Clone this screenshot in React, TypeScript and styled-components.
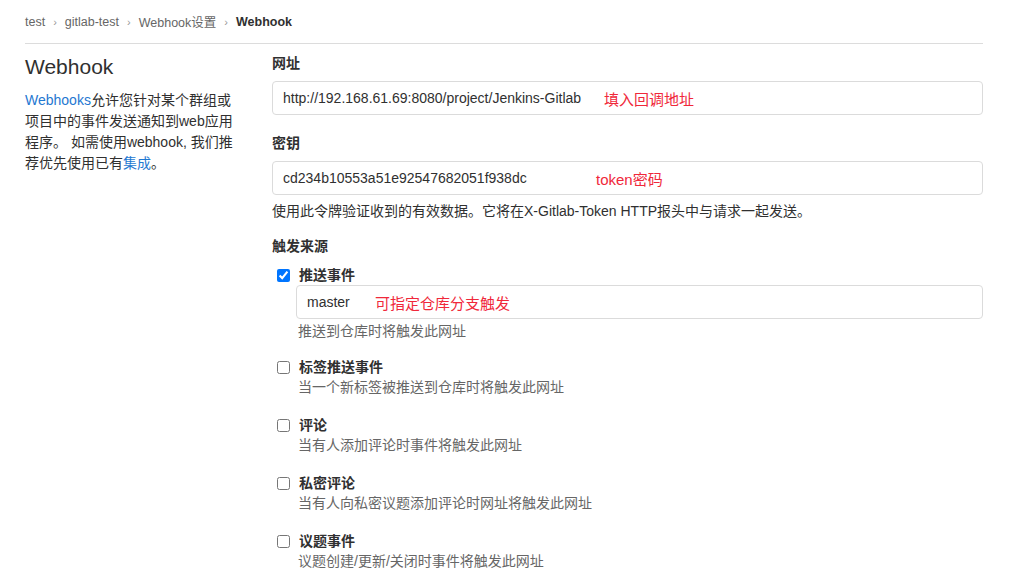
import React from 'react';
import styled, { createGlobalStyle } from 'styled-components';

const GlobalStyle = createGlobalStyle`
  body {
    margin: 0;
    background: #fff;
    font-family: "Liberation Sans", "Noto Sans CJK SC", sans-serif;
    color: #303030;
    font-size: 14px;
  }
`;

const Page = styled.div`
  width: 958px;
  padding-left: 25px;
`;

const Breadcrumbs = styled.nav`
  display: flex;
  align-items: center;
  height: 43px;
  border-bottom: 1px solid #dcdcdc;
  font-size: 12.5px;
  color: #666;
`;

const Crumb = styled.span<{ $current?: boolean }>`
  color: ${(p) => (p.$current ? '#303030' : '#666')};
  font-weight: ${(p) => (p.$current ? 700 : 400)};
`;

const Sep = styled.span`
  margin: 0 8px;
  color: #999;
  font-size: 11px;
`;

const Layout = styled.div`
  display: grid;
  grid-template-columns: 215px 1fr;
  column-gap: 32px;
`;

const Side = styled.div`
  padding-top: 9px;
`;

const Title = styled.h4`
  margin: 0 0 9px;
  font-size: 21px;
  font-weight: 500;
  line-height: 28px;
  color: #303030;
`;

const Desc = styled.p`
  margin: 0;
  line-height: 21px;
  color: #303030;
`;

const Link = styled.a`
  color: #1f78d1;
  text-decoration: none;
`;

const Form = styled.div`
  padding-top: 9px;
`;

const Label = styled.div`
  font-weight: 700;
  line-height: 20px;
  margin-bottom: 8px;
`;

const Field = styled.div<{ $mt?: number }>`
  margin-top: ${(p) => p.$mt ?? 0}px;
`;

const Input = styled.div`
  position: relative;
  height: 34px;
  box-sizing: border-box;
  border: 1px solid #dbdbdb;
  border-radius: 4px;
  padding: 0 10px;
  display: flex;
  align-items: center;
  color: #303030;
`;

const Note = styled.span<{ $left: number }>`
  position: absolute;
  left: ${(p) => p.$left}px;
  top: 50%;
  transform: translateY(-50%);
  color: #f0283a;
  font-size: 15px;
`;

const Help = styled.div<{ $muted?: boolean; $mt?: number }>`
  margin-top: ${(p) => p.$mt ?? 0}px;
  padding-left: ${(p) => (p.$muted ? 2 : 0)}px;
  line-height: 20px;
  color: ${(p) => (p.$muted ? '#666' : '#303030')};
`;

const Check = styled.div<{ $mt?: number }>`
  margin-top: ${(p) => p.$mt ?? 0}px;
`;

const CheckRow = styled.label`
  display: flex;
  align-items: center;
  padding-left: 5px;
  font-weight: 700;
  line-height: 20px;
  input {
    margin: 0 9px 0 0;
    width: 13px;
    height: 13px;
  }
`;

const CheckBody = styled.div`
  padding-left: 24px;
`;

const events = [
  { title: '标签推送事件', desc: '当一个新标签被推送到仓库时将触发此网址' },
  { title: '评论', desc: '当有人添加评论时事件将触发此网址' },
  { title: '私密评论', desc: '当有人向私密议题添加评论时网址将触发此网址' },
  { title: '议题事件', desc: '议题创建/更新/关闭时事件将触发此网址' },
];

export default function App() {
  return (
    <>
      <GlobalStyle />
      <Page>
        <Breadcrumbs>
          <Crumb>test</Crumb>
          <Sep>›</Sep>
          <Crumb>gitlab-test</Crumb>
          <Sep>›</Sep>
          <Crumb>Webhook设置</Crumb>
          <Sep>›</Sep>
          <Crumb $current>Webhook</Crumb>
        </Breadcrumbs>
        <Layout>
          <Side>
            <Title>Webhook</Title>
            <Desc>
              <Link>Webhooks</Link>允许您针对某个群组或项目中的事件发送通知到web应用程序。 如需使用webhook, 我们推荐优先使用已有<Link>集成</Link>。
            </Desc>
          </Side>
          <Form>
            <Field>
              <Label>网址</Label>
              <Input>
                http://192.168.61.69:8080/project/Jenkins-Gitlab
                <Note $left={331}>填入回调地址</Note>
              </Input>
            </Field>
            <Field $mt={18}>
              <Label>密钥</Label>
              <Input>
                cd234b10553a51e92547682051f938dc
                <Note $left={323}>token密码</Note>
              </Input>
              <Help $mt={6}>使用此令牌验证收到的有效数据。它将在X-Gitlab-Token HTTP报头中与请求一起发送。</Help>
            </Field>
            <Field $mt={15}>
              <Label>触发来源</Label>
              <Check $mt={9}>
                <CheckRow>
                  <input type="checkbox" defaultChecked />
                  推送事件
                </CheckRow>
                <CheckBody>
                  <Input>
                    master
                    <Note $left={78}>可指定仓库分支触发</Note>
                  </Input>
                  <Help $muted $mt={2}>推送到仓库时将触发此网址</Help>
                </CheckBody>
              </Check>
              {events.map((e, i) => (
                <Check key={e.title} $mt={i === 0 ? 16 : 18}>
                  <CheckRow>
                    <input type="checkbox" />
                    {e.title}
                  </CheckRow>
                  <CheckBody>
                    <Help $muted>{e.desc}</Help>
                  </CheckBody>
                </Check>
              ))}
            </Field>
          </Form>
        </Layout>
      </Page>
    </>
  );
}
